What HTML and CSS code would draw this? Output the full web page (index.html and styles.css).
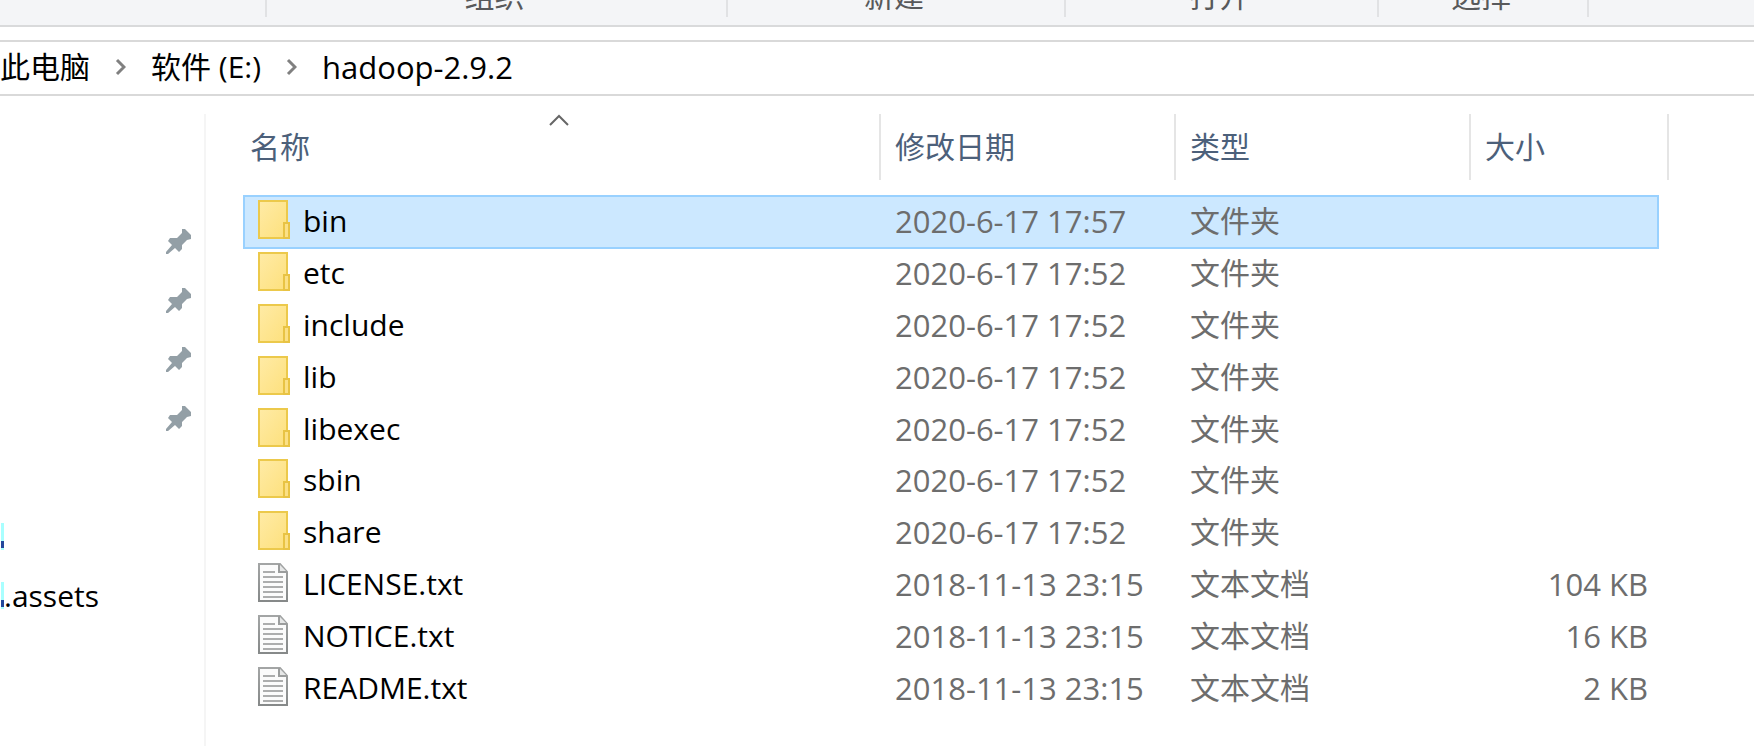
FILE: index.html
```html
<!DOCTYPE html>
<html lang="zh-CN">
<head>
    <meta charset="UTF-8">
    <meta name="viewport" content="width=device-width, initial-scale=1.0">
    <title>hadoop-2.9.2</title>
    <link rel="stylesheet" href="styles.css">
</head>
<body>
    <!-- shared icons -->
    <svg class="sprite" aria-hidden="true">
        <defs>
            <linearGradient id="folder-fill" x1="0" y1="0" x2="1" y2="1">
                <stop offset="0" stop-color="#ffeba6"/>
                <stop offset="1" stop-color="#fde07c"/>
            </linearGradient>
            <linearGradient id="page-edge" x1="0" y1="0" x2="0" y2="1">
                <stop offset="0" stop-color="#a3a5a5"/>
                <stop offset="1" stop-color="#868989"/>
            </linearGradient>
        </defs>
        <symbol id="icon-folder" viewBox="0 0 32 40">
            <rect x="1" y="1" width="28" height="37" fill="url(#folder-fill)" stroke="#ecc94b" stroke-width="2"/>
            <path d="M26 38V23h5v15z" fill="#fbe085" stroke="#e8c344" stroke-width="2"/>
        </symbol>
        <symbol id="icon-text" viewBox="0 0 32 40">
            <path d="M1 1h21l7 8v29H1z" fill="#fbfbfb" stroke="url(#page-edge)" stroke-width="2"/>
            <path d="M21 1v8h8" fill="#e6e7e7" stroke="#9b9d9d" stroke-width="2"/>
            <path d="M5 9h12M5 14h20M5 19h20M5 24h20M5 29h20M5 34h20" stroke="#acadad" stroke-width="2"/>
        </symbol>
        <symbol id="icon-pin" viewBox="0 0 26 26">
            <path d="M16 0h3l6 6v4l-4 1-5 5v4l-3 3-4-4-7 6H0v-2l6-7-4-4 2-3h7l5-5z" fill="#939fa6"/>
        </symbol>
    </svg>

    <div class="ribbon">
        <div class="group organize">组织</div>
        <div class="group create">新建</div>
        <div class="group open">打开</div>
        <div class="group select">选择</div>
    </div>

    <nav class="address">
        <a href="#">此电脑</a>
        <svg class="chevron" viewBox="0 0 11 18"><path d="M2 2l7 7-7 7"/></svg>
        <a href="#">软件 (E:)</a>
        <svg class="chevron" viewBox="0 0 11 18"><path d="M2 2l7 7-7 7"/></svg>
        <a href="#" class="current">hadoop-2.9.2</a>
    </nav>

    <div class="explorer">
        <ul class="quick-access">
            <li><svg class="pin"><use href="#icon-pin"/></svg></li>
            <li><svg class="pin"><use href="#icon-pin"/></svg></li>
            <li><svg class="pin"><use href="#icon-pin"/></svg></li>
            <li><svg class="pin"><use href="#icon-pin"/></svg></li>
            <li></li>
            <li><span class="clipped"></span></li>
            <li><span class="clipped"></span>.assets</li>
        </ul>

        <main class="files">
            <table>
                <colgroup>
                    <col class="col-name">
                    <col class="col-date">
                    <col class="col-type">
                    <col class="col-size">
                </colgroup>
                <thead>
                    <tr>
                        <th><div class="heading">名称<svg class="sort" viewBox="0 0 20 12"><path d="M1 11l9-9 9 9"/></svg></div></th>
                        <th><div class="heading">修改日期</div></th>
                        <th><div class="heading">类型</div></th>
                        <th><div class="heading">大小</div></th>
                    </tr>
                </thead>
                <tbody>
                    <tr class="selected"><td><div class="name"><svg><use href="#icon-folder"/></svg>bin</div></td><td class="num">2020-6-17 17:57</td><td>文件夹</td><td></td></tr>
                    <tr><td><div class="name"><svg><use href="#icon-folder"/></svg>etc</div></td><td class="num">2020-6-17 17:52</td><td>文件夹</td><td></td></tr>
                    <tr><td><div class="name"><svg><use href="#icon-folder"/></svg>include</div></td><td class="num">2020-6-17 17:52</td><td>文件夹</td><td></td></tr>
                    <tr><td><div class="name"><svg><use href="#icon-folder"/></svg>lib</div></td><td class="num">2020-6-17 17:52</td><td>文件夹</td><td></td></tr>
                    <tr><td><div class="name"><svg><use href="#icon-folder"/></svg>libexec</div></td><td class="num">2020-6-17 17:52</td><td>文件夹</td><td></td></tr>
                    <tr><td><div class="name"><svg><use href="#icon-folder"/></svg>sbin</div></td><td class="num">2020-6-17 17:52</td><td>文件夹</td><td></td></tr>
                    <tr><td><div class="name"><svg><use href="#icon-folder"/></svg>share</div></td><td class="num">2020-6-17 17:52</td><td>文件夹</td><td></td></tr>
                    <tr><td><div class="name"><svg><use href="#icon-text"/></svg>LICENSE.txt</div></td><td class="num">2018-11-13 23:15</td><td>文本文档</td><td class="num">104 KB</td></tr>
                    <tr><td><div class="name"><svg><use href="#icon-text"/></svg>NOTICE.txt</div></td><td class="num">2018-11-13 23:15</td><td>文本文档</td><td class="num">16 KB</td></tr>
                    <tr><td><div class="name"><svg><use href="#icon-text"/></svg>README.txt</div></td><td class="num">2018-11-13 23:15</td><td>文本文档</td><td class="num">2 KB</td></tr>
                </tbody>
            </table>
        </main>
    </div>
</body>
</html>
```
FILE: styles.css
```css
* {
    box-sizing: border-box;
}
body {
    margin: 0;
    min-height: 100vh;
    display: flex;
    flex-direction: column;
    overflow: hidden;
    background: #fff;
    color: #000;
    font-family: "Open Sans", "Noto Sans CJK SC", sans-serif;
    font-size: 30px;
    line-height: 40px;
}
.sprite {
    position: absolute;
    width: 0;
    height: 0;
}

/* bottom edge of the ribbon */
.ribbon {
    display: flex;
    align-items: flex-start;
    height: 27px;
    padding-left: 267px;
    background: #f4f5f7;
    border-bottom: 2px solid #d9dadb;
    overflow: hidden;
}
.ribbon::before {
    content: "";
    width: 2px;
    height: 17px;
    margin-left: -2px;
    background: #e1e2e4;
}
.group {
    display: flex;
    justify-content: center;
    align-items: flex-end;
    height: 17px;
    padding: 0 4px 1px 0;
    color: #58595b;
    border-right: 2px solid #e1e2e4;
}
.organize {
    width: 461px;
}
.create {
    width: 338px;
}
.open {
    width: 313px;
}
.select {
    width: 210px;
}

/* address bar */
.address {
    display: flex;
    align-items: center;
    gap: 25px;
    height: 56px;
    margin-top: 13px;
    padding-bottom: 3px;
    border-top: 2px solid #d9d9d9;
    border-bottom: 2px solid #d9d9d9;
}
.address a {
    color: #000;
    text-decoration: none;
    white-space: nowrap;
}
.address .current {
    font-size: 31px;
}
.chevron {
    width: 11px;
    height: 18px;
    fill: none;
    stroke: #808080;
    stroke-width: 3;
}

.explorer {
    flex: 1;
    display: flex;
    padding-top: 18px;
}
.quick-access {
    width: 206px;
    margin: 0;
    padding: 98px 12px 0 0;
    list-style: none;
    border-right: 2px solid #f5f5f5;
}
.quick-access li {
    display: flex;
    align-items: center;
    height: 59px;
}
.pin {
    width: 26px;
    height: 26px;
    margin-left: auto;
}
.clipped {
    width: 3px;
    height: 27px;
    margin-left: 1px;
    background: linear-gradient(#a8ffff 66%, #23489c 66%, #23489c 92%, #a8ffff 92%);
}

/* file list */
.files {
    flex: 1;
    padding: 0 96px 0 38px;
}
table {
    width: 100%;
    table-layout: fixed;
    border-collapse: collapse;
}
.col-date,
.col-type {
    width: 295px;
}
.col-size {
    width: 187px;
}
th {
    height: 82px;
    padding: 0;
    vertical-align: top;
    font-weight: normal;
    text-align: left;
}
.heading {
    position: relative;
    height: 66px;
    padding-left: 14px;
    line-height: 66px;
    color: #4c607a;
    border-right: 2px solid #e5e5e5;
}
th:first-child .heading {
    padding-left: 6px;
}
/* the last divider stands past the end of the rows */
th:last-child .heading {
    margin-right: -11px;
}
.sort {
    position: absolute;
    top: 0;
    left: 48%;
    width: 20px;
    height: 12px;
    fill: none;
    stroke: #666;
    stroke-width: 2;
}
tbody tr {
    height: 52px;
}
tbody tr:nth-child(5n) {
    height: 51px;
}
td {
    padding: 0 0 2px 14px;
    color: #6d6d6d;
    white-space: nowrap;
}
td:first-child {
    color: #000;
}
td:last-child {
    padding-right: 10px;
    text-align: right;
}
.num {
    font-size: 31px;
}
.name {
    display: flex;
    align-items: center;
    gap: 13px;
}
.name svg {
    width: 32px;
    height: 40px;
    margin-bottom: 2px;
}
.selected {
    background: #cce8ff;
    outline: 2px solid #99d1ff;
    outline-offset: -1px;
}
```
